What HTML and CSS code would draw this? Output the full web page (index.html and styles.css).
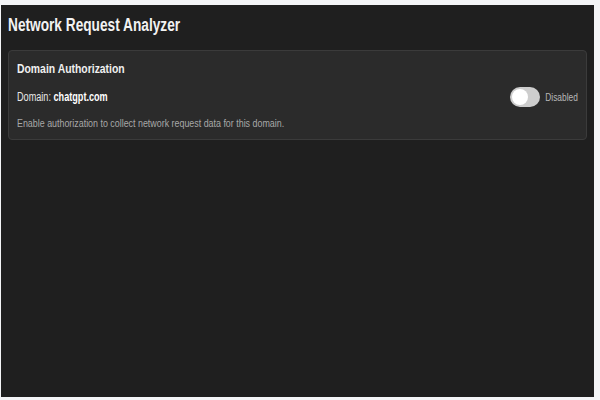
FILE: index.html
```html
<!DOCTYPE html>
<html>
<head>
<meta charset="utf-8">
<link rel="stylesheet" href="styles.css">
</head>
<body>
<div class="panel">
  <h1 class="title"><span class="narrow">Network Request Analyzer</span></h1>
  <section class="card">
    <h2 class="card-title"><span class="narrow">Domain Authorization</span></h2>
    <div class="row">
      <div class="domain"><span class="narrow">Domain: <strong>chatgpt.com</strong></span></div>
      <div class="toggle-wrap">
        <span class="toggle"><span class="knob"></span></span>
        <span class="status"><span class="narrow narrow-right">Disabled</span></span>
      </div>
    </div>
    <p class="hint"><span class="narrow">Enable authorization to collect network request data for this domain.</span></p>
  </section>
</div>
</body>
</html>
```

FILE: styles.css
```css
html, body {
  margin: 0;
  padding: 0;
  background: #f4f5f7;
  width: 600px;
  height: 400px;
  overflow: hidden;
}
body {
  font-family: "Liberation Sans", Arial, sans-serif;
}
.narrow {
  display: inline-block;
  white-space: nowrap;
  transform: scaleX(0.76);
  transform-origin: left center;
}
.narrow-right {
  transform-origin: right center;
}
.panel {
  margin: 5px 6px 0 1px;
  height: 392px;
  background: #1f1f1f;
  padding: 9px 7px 0 7px;
  box-sizing: border-box;
  color: #f0f0f0;
}
.title {
  margin: 0 0 14px 0;
  font-size: 18px;
  font-weight: bold;
  line-height: 22px;
  color: #f2f2f2;
}
.card {
  background: #2b2b2b;
  border: 1px solid #3b3b3b;
  border-radius: 4px;
  padding: 9px 8px 9px 8px;
}
.card-title {
  margin: 0 0 8px 0;
  font-size: 13.7px;
  font-weight: bold;
  line-height: 18px;
  color: #f0f0f0;
}
.row {
  display: flex;
  align-items: center;
  justify-content: space-between;
  height: 22px;
}
.domain {
  font-size: 12px;
  line-height: 15px;
  color: #e8e8e8;
}
.domain strong {
  color: #ffffff;
}
.toggle-wrap {
  display: flex;
  align-items: center;
}
.toggle {
  display: flex;
  align-items: center;
  width: 30px;
  height: 20px;
  border-radius: 10px;
  background: #cdcdcd;
  box-sizing: border-box;
  padding: 2px;
}
.knob {
  width: 16px;
  height: 16px;
  border-radius: 50%;
  background: #ffffff;
}
.status {
  width: 38px;
  display: flex;
  justify-content: flex-end;
  font-size: 11px;
  line-height: 15px;
  color: #b8b8b8;
}
.hint {
  margin: 7px 0 0 0;
  font-size: 11.7px;
  line-height: 15px;
  color: #a8a8a8;
}
```
